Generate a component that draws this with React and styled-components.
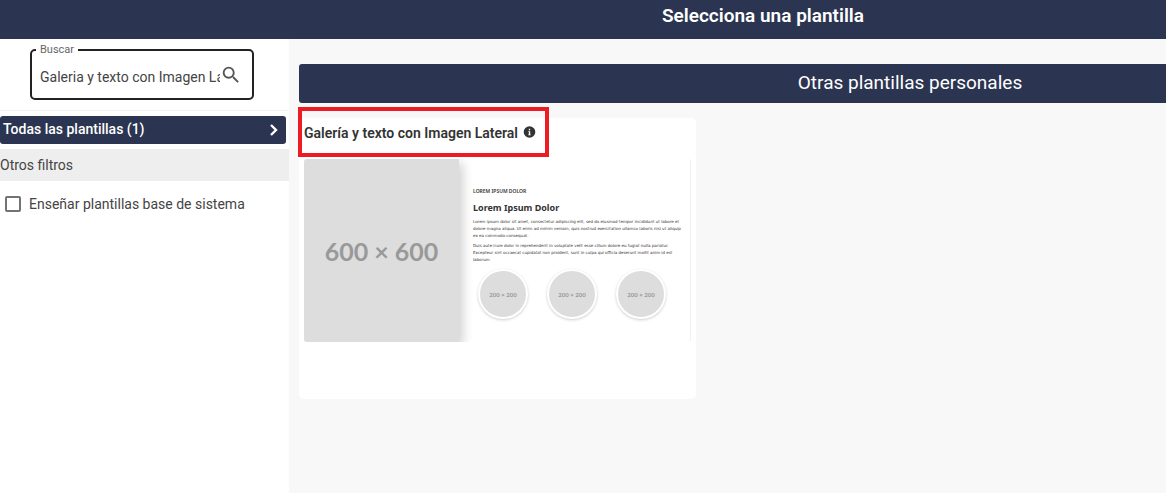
import * as React from "react";
import { useState } from "react";
import styled, { createGlobalStyle } from "styled-components";

const navy = "#2b3551";

const GlobalStyle = createGlobalStyle`
  * {
    box-sizing: border-box;
  }
  body {
    margin: 0;
    background: #f8f8f8;
    color: #444;
    font-family: Roboto, "Liberation Sans", sans-serif;
    font-size: 14px;
  }
`;

const Page = styled.div`
  display: flex;
  flex-direction: column;
  min-height: 100vh;
`;

const Header = styled.header`
  background: ${navy};
  padding: 4px 0 11px 360px;
  text-align: center;
`;

const Title = styled.h1`
  margin: 0;
  color: #fff;
  font-size: 19px;
  font-weight: 600;
  line-height: 24px;
`;

const Body = styled.div`
  display: flex;
  flex: 1;
`;

const Sidebar = styled.aside`
  flex: 0 0 289px;
  min-width: 0;
  background: #fff;
`;

const SearchArea = styled.div`
  padding: 5px 35px 10px 30px;
  border-bottom: 1px solid #f3f3f3;
`;

const SearchField = styled.fieldset`
  display: flex;
  align-items: center;
  min-width: 0;
  height: 56px;
  margin: 0;
  padding: 0 10px 0 4px;
  border: 2px solid #222;
  border-radius: 5px;
`;

const SearchLegend = styled.legend`
  padding: 0 4px;
  color: #666;
  font-size: 11px;
  line-height: 12px;
`;

const SearchInput = styled.input`
  flex: 1;
  min-width: 0;
  height: 32px;
  padding: 0 0 0 4px;
  border: 0;
  outline: 0;
  background: none;
  color: #444;
  font: inherit;
`;

const SearchButton = styled.button`
  display: flex;
  padding: 0 0 4px;
  border: 0;
  background: none;
  color: #555;
  cursor: pointer;
`;

const FilterButton = styled.button`
  display: flex;
  align-items: center;
  justify-content: space-between;
  width: 286px;
  height: 28px;
  margin: 5px 0;
  padding: 0 5px 2px 3px;
  border: 0;
  border-radius: 3px;
  background: ${navy};
  color: #fff;
  font: inherit;
  font-weight: 500;
  cursor: pointer;
`;

const FilterHeading = styled.h2`
  margin: 0;
  background: #eee;
  font-size: 14px;
  font-weight: 400;
  line-height: 32px;
`;

const CheckLabel = styled.label`
  display: flex;
  align-items: center;
  gap: 8px;
  padding: 14px 5px;
  line-height: 18px;
`;

const Checkbox = styled.input`
  appearance: none;
  width: 16px;
  height: 16px;
  margin: 0;
  border: 2px solid #737373;
  border-radius: 2px;
  background: #fff;

  &:checked {
    background: ${navy};
  }
`;

const Main = styled.main`
  flex: 1;
  min-width: 0;
  padding: 25px 0 24px 10px;
`;

const SectionTitle = styled.h2`
  margin: 0 0 15px;
  padding: 0 0 1px 355px;
  border-radius: 3px 0 0 3px;
  background: ${navy};
  color: #fff;
  font-size: 19px;
  font-weight: 400;
  line-height: 38px;
  text-align: center;
`;

const Card = styled.article`
  width: 397px;
  padding: 0 5px 57px;
  border-radius: 5px;
  background: #fff;
`;

const CardHeader = styled.div`
  position: relative;
  display: flex;
  align-items: center;
  gap: 5px;
  padding: 5px 0 11px;
`;

const Highlight = styled.span`
  position: absolute;
  top: -11px;
  left: -6px;
  width: 251px;
  height: 50px;
  border: 4px solid #ed1c24;
  pointer-events: none;
`;

const CardTitle = styled.h3`
  margin: 0;
  color: #333;
  font-size: 14px;
  font-weight: 600;
  line-height: 20px;
`;

const Preview = styled.div`
  display: flex;
  height: 183px;
  margin-top: 5px;
  border-right: 1px solid #f0f0f0;
  border-radius: 3px;
  overflow: hidden;
`;

const Placeholder = styled.div`
  display: flex;
  align-items: center;
  justify-content: center;
  flex-shrink: 0;
  background: #ddd;
  color: #999;
  font-family: Lato, sans-serif;
  font-weight: 700;
`;

const SidePicture = styled(Placeholder)`
  width: 155px;
  box-shadow: 4px 4px 10px rgba(0, 0, 0, 0.18);
  font-size: 25px;
`;

const RoundPicture = styled(Placeholder)`
  width: 50px;
  height: 50px;
  border: 2px solid #fff;
  border-radius: 50%;
  box-shadow: 0 1px 3px rgba(0, 0, 0, 0.2);
  font-size: 6px;
`;

const PreviewText = styled.div`
  flex: 1;
  min-width: 0;
  padding: 28px 0 0 14px;
  color: #333;
  font-family: "Noto Sans", sans-serif;
  white-space: nowrap;
`;

const Kicker = styled.div`
  font-size: 5px;
  font-weight: 600;
  line-height: 8px;
`;

const PreviewTitle = styled.div`
  margin: 7px 0 4px;
  font-size: 9px;
  font-weight: 700;
  line-height: 12px;
`;

const Paragraph = styled.p`
  margin: 0 0 3px;
  font-family: "DejaVu Sans", sans-serif;
  font-size: 4px;
  line-height: 7px;
`;

const Line = styled.span`
  display: block;
`;

const Gallery = styled.div`
  display: flex;
  gap: 19px;
  padding: 3px 5px;
`;

const paragraphs = [
  [
    "Lorem ipsum dolor sit amet, consectetur adipiscing elit, sed do eiusmod tempor incididunt ut labore et",
    "dolore magna aliqua. Ut enim ad minim veniam, quis nostrud exercitation ullamco laboris nisi ut aliquip",
    "ex ea commodo consequat.",
  ],
  [
    "Duis aute irure dolor in reprehenderit in voluptate velit esse cillum dolore eu fugiat nulla pariatur.",
    "Excepteur sint occaecat cupidatat non proident, sunt in culpa qui officia deserunt mollit anim id est",
    "laborum",
  ],
];

function SearchIcon() {
  return (
    <svg width="22" height="22" viewBox="0 0 24 24" fill="currentColor" aria-hidden="true">
      <path d="M15.5 14h-.79l-.28-.27A6.471 6.471 0 0 0 16 9.500 6.500 6.500 0 1 0 9.500 16c1.610 0 3.090-.59 4.230-1.570l.27.28v.79l5 4.990L20.490 19l-4.990-5zm-6 0C7.010 14 5 11.990 5 9.500S7.010 5 9.500 5 14 7.010 14 9.500 11.990 14 9.500 14z" />
    </svg>
  );
}

function ChevronIcon() {
  return (
    <svg width="14" height="14" viewBox="0 0 14 14" fill="none" aria-hidden="true">
      <path d="M4 3l5 5-5 5" stroke="#fff" strokeWidth="2.4" />
    </svg>
  );
}

function InfoIcon() {
  return (
    <svg width="13" height="14" viewBox="0 0 13 14" aria-hidden="true">
      <circle cx="6.500" cy="6" r="5.800" fill="#333" />
      <path d="M5.300 5.200h1.900v3.300h.6v.8H5.200v-.8h.6V6h-.5zM5.800 2.800h1.400v1.400H5.800z" fill="#fff" />
    </svg>
  );
}

export default function App() {
  const [search, setSearch] = useState("Galeria y texto con Imagen Lateral");
  const [showBase, setShowBase] = useState(false);

  return (
    <Page>
      <GlobalStyle />
      <Header>
        <Title>Selecciona una plantilla</Title>
      </Header>
      <Body>
        <Sidebar>
          <SearchArea>
            <SearchField>
              <SearchLegend>
                <label htmlFor="search">Buscar</label>
              </SearchLegend>
              <SearchInput
                id="search"
                type="text"
                value={search}
                onChange={(e) => setSearch(e.target.value)}
              />
              <SearchButton type="button" aria-label="Buscar">
                <SearchIcon />
              </SearchButton>
            </SearchField>
          </SearchArea>
          <FilterButton type="button">
            <span>Todas las plantillas (1)</span>
            <ChevronIcon />
          </FilterButton>
          <FilterHeading>Otros filtros</FilterHeading>
          <CheckLabel>
            <Checkbox
              type="checkbox"
              checked={showBase}
              onChange={(e) => setShowBase(e.target.checked)}
            />
            Enseñar plantillas base de sistema
          </CheckLabel>
        </Sidebar>
        <Main>
          <SectionTitle>Otras plantillas personales</SectionTitle>
          <Card>
            <CardHeader>
              <CardTitle>Galería y texto con Imagen Lateral</CardTitle>
              <InfoIcon />
              <Highlight />
            </CardHeader>
            <Preview>
              <SidePicture>600 × 600</SidePicture>
              <PreviewText>
                <Kicker>LOREM IPSUM DOLOR</Kicker>
                <PreviewTitle>Lorem Ipsum Dolor</PreviewTitle>
                {paragraphs.map((lines, i) => (
                  <Paragraph key={i}>
                    {lines.map((line) => (
                      <Line key={line}>{line}</Line>
                    ))}
                  </Paragraph>
                ))}
                <Gallery>
                  <RoundPicture>200 × 200</RoundPicture>
                  <RoundPicture>200 × 200</RoundPicture>
                  <RoundPicture>200 × 200</RoundPicture>
                </Gallery>
              </PreviewText>
            </Preview>
          </Card>
        </Main>
      </Body>
    </Page>
  );
}
